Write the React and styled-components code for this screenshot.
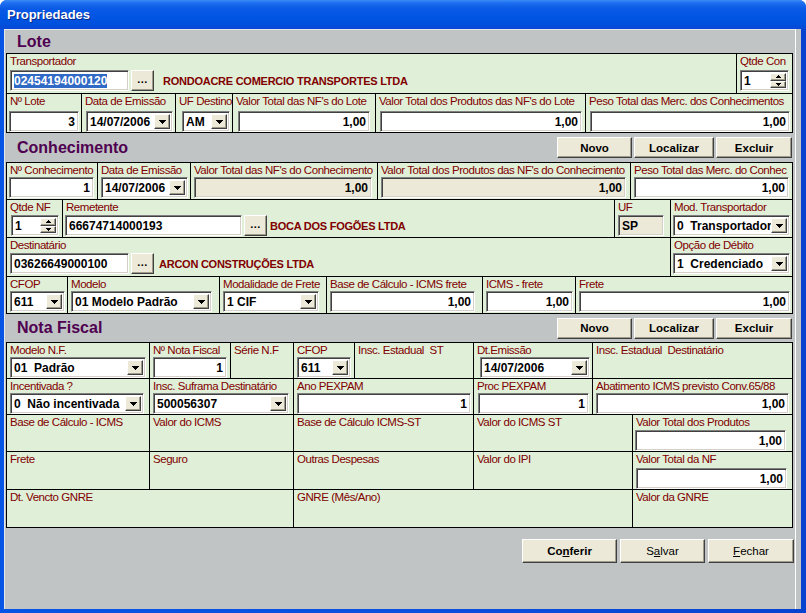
import React from 'react';
import styled, { createGlobalStyle } from 'styled-components';

const GRAY = '#c0c4c4';
const GREEN = '#e0efd8';
const FACE = '#ece9d8';
const MAROON = '#800000';

const GlobalStyle = createGlobalStyle`
  html, body {
    margin: 0;
    padding: 0;
    background: #fff;
  }
  body {
    font-family: "Liberation Sans", Arial, sans-serif;
    font-size: 11px;
  }
`;

const Window = styled.div`
  width: 806px;
  height: 613px;
  display: flex;
  flex-direction: column;
  border-radius: 7px 7px 0 0;
  overflow: hidden;
  background: #0a4fe0;
`;

const TitleBar = styled.div`
  height: 29px;
  flex: none;
  display: flex;
  align-items: center;
  padding-left: 7px;
  background: linear-gradient(
    to bottom,
    #3a8cf6 0%,
    #1e6ff0 10%,
    #0a5ae6 30%,
    #0055e2 60%,
    #0050dc 85%,
    #0a48d4 100%
  );
  color: #fff;
  font: bold 13px "Liberation Sans", Arial, sans-serif;
  text-shadow: 1px 1px 0 #0b2a8a;
`;

const Frame = styled.div`
  flex: 1;
  display: flex;
  padding: 0 5px 4px 4px;
  background: linear-gradient(to right, #0655e4, #0a4fe0 50%, #0843d0);
  min-height: 0;
`;

const Client = styled.div`
  width: 792px;
  box-sizing: border-box;
  flex: none;
  display: flex;
  flex-direction: column;
  background: ${GRAY};
  border-top: 1px solid #e4e8e8;
  border-left: 1px solid #e4e8e8;
  border-right: 1px solid #fff;
`;

const Strip = styled.div`
  width: 5px;
  flex: none;
  background: ${GRAY};
`;

const SectionHead = styled.div`
  height: ${p => p.$h}px;
  flex: none;
  display: flex;
  align-items: center;
  padding: 0 3px 0 12px;
`;

const SectionTitle = styled.div`
  font: bold 16px "Liberation Sans", Arial, sans-serif;
  color: #4f0050;
  margin-right: auto;
`;

const HeadButtons = styled.div`
  display: flex;
  gap: 2px;
`;

const Button = styled.button`
  box-sizing: border-box;
  width: ${p => p.$w}px;
  height: ${p => p.$h || 21}px;
  padding: 0;
  background: ${FACE};
  border: 1px solid;
  border-color: #fff #404040 #404040 #fff;
  box-shadow: inset -1px -1px 0 #a09c8c;
  font: ${p => (p.$bold ? 'bold ' : '')}11.5px "Liberation Sans", Arial, sans-serif;
  color: #000;
  cursor: default;
`;

const Box = styled.div`
  margin: 0 2px 0 1px;
  border: 1px solid #000;
  background: ${GREEN};
  flex: none;
`;

const Row = styled.div`
  display: flex;
  height: ${p => p.$h}px;
  & + & {
    border-top: 1px solid #000;
  }
`;

const Cell = styled.div`
  box-sizing: border-box;
  ${p => (p.$w ? `width: ${p.$w}px; flex: none;` : 'flex: 1; min-width: 0;')}
  display: flex;
  flex-direction: column;
  align-items: flex-start;
  padding: 1px 2px 0 3px;
  overflow: hidden;
  & + & {
    border-left: 1px solid #000;
  }
`;

const Label = styled.div`
  height: 13px;
  line-height: 13px;
  font-size: 11.5px;
  color: ${MAROON};
  letter-spacing: -0.45px;
  white-space: pre;
  margin-bottom: ${p => p.$mb || 0}px;
`;

const Line = styled.div`
  display: flex;
  align-items: center;
  width: 100%;
`;

const Field = styled.div`
  box-sizing: border-box;
  height: ${p => p.$h || 21}px;
  width: ${p => (p.$w ? `${p.$w}px` : '100%')};
  margin-left: ${p => p.$ml || 0}px;
  flex: none;
  display: flex;
  align-items: center;
  justify-content: ${p => (p.$right ? 'flex-end' : 'flex-start')};
  padding: 0 3px;
  background: ${p => (p.$disabled ? FACE : '#fff')};
  border: 1px solid;
  border-color: #808080 #fff #fff #808080;
  box-shadow: inset 1px 1px 0 #404040, inset -1px -1px 0 #d4d0c8;
  font: bold 12px "Liberation Sans", Arial, sans-serif;
  color: #000;
  white-space: nowrap;
  overflow: hidden;
`;

const ComboBox = styled(Field)`
  padding: 2px 2px 2px 3px;
  align-items: stretch;
`;

const ComboText = styled.span`
  flex: 1;
  min-width: 0;
  overflow: hidden;
  display: flex;
  align-items: center;
  white-space: pre;
`;

const SideBtn = styled.span`
  box-sizing: border-box;
  width: 16px;
  flex: none;
  display: flex;
  align-items: center;
  justify-content: center;
  background: ${FACE};
  border: 1px solid;
  border-color: #fff #404040 #404040 #fff;
  box-shadow: inset -1px -1px 0 #a09c8c;
`;

const SpinCol = styled.span`
  width: 16px;
  flex: none;
  display: flex;
  flex-direction: column;
  & > span {
    flex: 1;
    width: 16px;
  }
`;

const Selected = styled.span`
  background: #316ac5;
  color: #fff;
  line-height: 14px;
`;

const DotsButton = styled(Button)`
  margin-left: 2px;
  font-weight: bold;
  font-size: 11px;
  letter-spacing: 0.5px;
  padding-bottom: 3px;
`;

const Company = styled.span`
  margin-left: ${p => p.$ml}px;
  font: bold 11px "Liberation Sans", Arial, sans-serif;
  letter-spacing: -0.25px;
  color: ${MAROON};
  white-space: nowrap;
`;

const Footer = styled.div`
  display: flex;
  justify-content: flex-end;
  gap: 3px;
  margin-top: 11px;
  padding-right: 1px;
`;

const DownArrow = () => (
  <svg width="7" height="4" viewBox="0 0 7 4">
    <path d="M0 0h7v1H0zM1 1h5v1H1zM2 2h3v1H2zM3 3h1v1H3z" fill="#000" />
  </svg>
);

const SmallArrow = ({ up }) => (
  <svg width="5" height="3" viewBox="0 0 5 3">
    <path
      d={up ? 'M2 0h1v1H2zM1 1h3v1H1zM0 2h5v1H0z' : 'M0 0h5v1H0zM1 1h3v1H1zM2 2h1v1H2z'}
      fill="#000"
    />
  </svg>
);

function Combo({ w, ml, children }) {
  return (
    <ComboBox $w={w} $ml={ml}>
      <ComboText>{children}</ComboText>
      <SideBtn>
        <DownArrow />
      </SideBtn>
    </ComboBox>
  );
}

function Spinner({ w, ml, children }) {
  return (
    <ComboBox $w={w} $ml={ml}>
      <ComboText>{children}</ComboText>
      <SpinCol>
        <SideBtn>
          <SmallArrow up />
        </SideBtn>
        <SideBtn>
          <SmallArrow />
        </SideBtn>
      </SpinCol>
    </ComboBox>
  );
}

function HeadActions() {
  return (
    <HeadButtons>
      <Button $w={75} $bold>Novo</Button>
      <Button $w={80} $bold>Localizar</Button>
      <Button $w={76} $bold>Excluir</Button>
    </HeadButtons>
  );
}

export default function App() {
  return (
    <>
      <GlobalStyle />
      <Window>
        <TitleBar>Propriedades</TitleBar>
        <Frame>
          <Client>
            <SectionHead $h={23}>
              <SectionTitle>Lote</SectionTitle>
            </SectionHead>
            <Box>
              <Row $h={39}>
                <Cell>
                  <Label $mb={2}>Transportador</Label>
                  <Line>
                    <Field $w={119} $ml={0}>
                      <Selected>02454194000120</Selected>
                    </Field>
                    <DotsButton $w={23}>...</DotsButton>
                    <Company $ml={9}>RONDOACRE COMERCIO TRANSPORTES LTDA</Company>
                  </Line>
                </Cell>
                <Cell $w={56}>
                  <Label $mb={2}>Qtde Con</Label>
                  <Spinner w={49}>1</Spinner>
                </Cell>
              </Row>
              <Row $h={38}>
                <Cell $w={74}>
                  <Label $mb={3}>Nº Lote</Label>
                  <Field $w={70} $ml={-1} $right>3</Field>
                </Cell>
                <Cell $w={94}>
                  <Label $mb={3}>Data de Emissão</Label>
                  <Combo w={87} ml={1}>14/07/2006</Combo>
                </Cell>
                <Cell $w={57}>
                  <Label $mb={3}>UF Destino</Label>
                  <Combo w={48} ml={3}>AM</Combo>
                </Cell>
                <Cell $w={143}>
                  <Label $mb={3}>Valor Total das NF's do Lote</Label>
                  <Field $w={132} $ml={2} $right>1,00</Field>
                </Cell>
                <Cell $w={210}>
                  <Label $mb={3}>Valor Total dos Produtos das NF's do Lote</Label>
                  <Field $w={202} $ml={1} $right>1,00</Field>
                </Cell>
                <Cell>
                  <Label $mb={3}>Peso Total das Merc. dos Conhecimentos</Label>
                  <Field $w={200} $ml={1} $right>1,00</Field>
                </Cell>
              </Row>
            </Box>

            <SectionHead $h={29}>
              <SectionTitle>Conhecimento</SectionTitle>
              <HeadActions />
            </SectionHead>
            <Box>
              <Row $h={36}>
                <Cell $w={90}>
                  <Label>Nº Conhecimento</Label>
                  <Field $w={85} $ml={-1} $right>1</Field>
                </Cell>
                <Cell $w={93}>
                  <Label>Data de Emissão</Label>
                  <Combo w={87}>14/07/2006</Combo>
                </Cell>
                <Cell $w={187}>
                  <Label>Valor Total das NF's do Conhecimento</Label>
                  <Field $w={178} $disabled $right>1,00</Field>
                </Cell>
                <Cell $w={253}>
                  <Label>Valor Total dos Produtos das NF's do Conhecimento</Label>
                  <Field $w={245} $disabled $right>1,00</Field>
                </Cell>
                <Cell>
                  <Label>Peso Total das Merc. do Conhec</Label>
                  <Field $w={155} $right>1,00</Field>
                </Cell>
              </Row>
              <Row $h={37}>
                <Cell $w={55}>
                  <Label $mb={1}>Qtde NF</Label>
                  <Spinner w={48} ml={1}>1</Spinner>
                </Cell>
                <Cell $w={552}>
                  <Label $mb={1}>Remetente</Label>
                  <Line>
                    <Field $w={177} $ml={-1}>66674714000193</Field>
                    <DotsButton $w={23}>...</DotsButton>
                    <Company $ml={3}>BOCA DOS FOGÕES LTDA</Company>
                  </Line>
                </Cell>
                <Cell $w={56}>
                  <Label $mb={1}>UF</Label>
                  <Field $w={46} $disabled>SP</Field>
                </Cell>
                <Cell>
                  <Label $mb={1}>Mod. Transportador</Label>
                  <Combo w={117} ml={-1}>0  Transportador</Combo>
                </Cell>
              </Row>
              <Row $h={38}>
                <Cell $w={663}>
                  <Label $mb={1}>Destinatário</Label>
                  <Line>
                    <Field $w={119}>03626649000100</Field>
                    <DotsButton $w={23}>...</DotsButton>
                    <Company $ml={5}>ARCON CONSTRUÇÕES LTDA</Company>
                  </Line>
                </Cell>
                <Cell>
                  <Label $mb={1}>Opção de Débito</Label>
                  <Combo w={117} ml={-1}>1  Credenciado</Combo>
                </Cell>
              </Row>
              <Row $h={36}>
                <Cell $w={60}>
                  <Label>CFOP</Label>
                  <Combo w={55}>611</Combo>
                </Cell>
                <Cell $w={152}>
                  <Label>Modelo</Label>
                  <Combo w={141}>01 Modelo Padrão</Combo>
                </Cell>
                <Cell $w={107}>
                  <Label>Modalidade de Frete</Label>
                  <Combo w={96}>1 CIF</Combo>
                </Cell>
                <Cell $w={156}>
                  <Label>Base de Cálculo - ICMS frete</Label>
                  <Field $w={145} $right>1,00</Field>
                </Cell>
                <Cell $w={93}>
                  <Label>ICMS - frete</Label>
                  <Field $w={87} $right>1,00</Field>
                </Cell>
                <Cell>
                  <Label>Frete</Label>
                  <Field $w={211} $right>1,00</Field>
                </Cell>
              </Row>
            </Box>

            <SectionHead $h={28}>
              <SectionTitle>Nota Fiscal</SectionTitle>
              <HeadActions />
            </SectionHead>
            <Box>
              <Row $h={35}>
                <Cell $w={142}>
                  <Label>Modelo N.F.</Label>
                  <Combo w={136}>01  Padrão</Combo>
                </Cell>
                <Cell $w={81}>
                  <Label>Nº Nota Fiscal</Label>
                  <Field $w={74} $right>1</Field>
                </Cell>
                <Cell $w={63}>
                  <Label>Série N.F</Label>
                </Cell>
                <Cell $w={61}>
                  <Label>CFOP</Label>
                  <Combo w={54}>611</Combo>
                </Cell>
                <Cell $w={119}>
                  <Label>Insc. Estadual  ST</Label>
                </Cell>
                <Cell $w={119}>
                  <Label>Dt.Emissão</Label>
                  <Combo w={110} ml={3}>14/07/2006</Combo>
                </Cell>
                <Cell>
                  <Label>Insc. Estadual  Destinatário</Label>
                </Cell>
              </Row>
              <Row $h={35}>
                <Cell $w={142}>
                  <Label>Incentivada ?</Label>
                  <Combo w={134}>0  Não incentivada</Combo>
                </Cell>
                <Cell $w={144}>
                  <Label>Insc. Suframa Destinatário</Label>
                  <Combo w={136}>500056307</Combo>
                </Cell>
                <Cell $w={180}>
                  <Label>Ano PEXPAM</Label>
                  <Field $w={174} $right>1</Field>
                </Cell>
                <Cell $w={119}>
                  <Label>Proc PEXPAM</Label>
                  <Field $w={111} $ml={1} $right>1</Field>
                </Cell>
                <Cell>
                  <Label>Abatimento ICMS previsto Conv.65/88</Label>
                  <Field $w={193} $right>1,00</Field>
                </Cell>
              </Row>
              <Row $h={36}>
                <Cell $w={142}>
                  <Label>Base de Cálculo - ICMS</Label>
                </Cell>
                <Cell $w={144}>
                  <Label>Valor do ICMS</Label>
                </Cell>
                <Cell $w={180}>
                  <Label>Base de Cálculo ICMS-ST</Label>
                </Cell>
                <Cell $w={159}>
                  <Label>Valor do ICMS ST</Label>
                </Cell>
                <Cell>
                  <Label $mb={1}>Valor Total dos Produtos</Label>
                  <Field $w={151} $ml={-1} $right>1,00</Field>
                </Cell>
              </Row>
              <Row $h={37}>
                <Cell $w={142}>
                  <Label>Frete</Label>
                </Cell>
                <Cell $w={144}>
                  <Label>Seguro</Label>
                </Cell>
                <Cell $w={180}>
                  <Label>Outras Despesas</Label>
                </Cell>
                <Cell $w={159}>
                  <Label>Valor do IPI</Label>
                </Cell>
                <Cell>
                  <Label $mb={2}>Valor Total da NF</Label>
                  <Field $w={151} $right>1,00</Field>
                </Cell>
              </Row>
              <Row $h={37}>
                <Cell $w={286}>
                  <Label>Dt. Vencto GNRE</Label>
                </Cell>
                <Cell $w={339}>
                  <Label>GNRE (Mês/Ano)</Label>
                </Cell>
                <Cell>
                  <Label>Valor da GNRE</Label>
                </Cell>
              </Row>
            </Box>

            <Footer>
              <Button $w={95} $h={24} $bold>
                Co<u>n</u>ferir
              </Button>
              <Button $w={85} $h={24}>
                S<u>a</u>lvar
              </Button>
              <Button $w={86} $h={24}>
                <u>F</u>echar
              </Button>
            </Footer>
          </Client>
          <Strip />
        </Frame>
      </Window>
    </>
  );
}
